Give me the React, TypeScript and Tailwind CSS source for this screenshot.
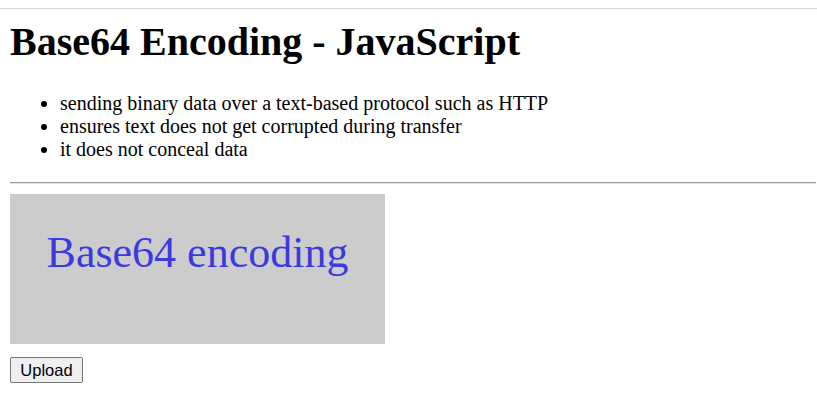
export default function App() {
  return (
    <div className="min-h-[414px] bg-white text-black font-['Liberation_Serif',serif]">
      <div className="h-2" />
      <div className="h-px bg-[#d6d6d6]" />
      <div className="pl-[10px] pr-px">
        <h1 className="mt-[10px] text-[40px] leading-[46px] font-bold">Base64 Encoding - JavaScript</h1>
        <ul className="mt-[27px] list-disc pl-[50px] text-[20px] leading-[23px]">
          <li>sending binary data over a text-based protocol such as HTTP</li>
          <li>ensures text does not get corrupted during transfer</li>
          <li>it does not conceal data</li>
        </ul>
        <hr className="mt-[21px] border-t border-b border-t-[#9a9a9a] border-b-[#e4e4e4]" />
        <div className="mt-[10px] w-[375px] h-[150px] bg-[#cccccc] flex items-start justify-center pt-[34px]">
          <span className="text-[44px] leading-[50px] text-[#3a3ae0]">Base64 encoding</span>
        </div>
        <button className="mt-[13px] h-[26px] w-[73px] border border-[#767676] bg-[#efefef] rounded-[2px] text-[16.5px] text-black font-['Liberation_Sans',Arial,sans-serif]">
          Upload
        </button>
      </div>
    </div>
  )
}
